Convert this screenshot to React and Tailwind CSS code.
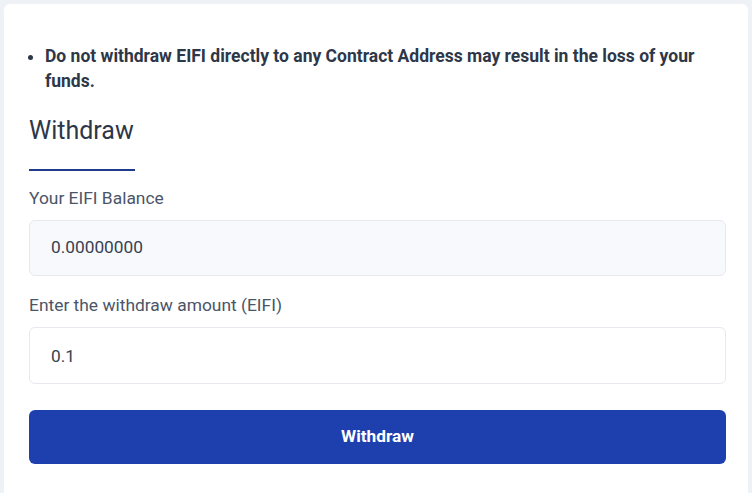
import React, { useState } from "react";

export default function App() {
  const [amount, setAmount] = useState("0.1");

  return (
    <div className="w-[752px] h-[493px] overflow-hidden bg-[#eef1f5] pl-[4px] pt-[4px] font-['Roboto',sans-serif]">
      <div className="w-[744px] h-[520px] bg-white rounded-[6px] pl-[25px] pr-[22px] pt-[40px]">
        <ul className="list-disc pl-[16px] text-[17.5px] leading-[25px] font-bold text-[#2d3748] marker:text-[#2d3748]">
          <li>
            Do not withdraw EIFI directly to any Contract Address may result in the loss of your funds.
          </li>
        </ul>

        <h2 className="mt-[21px] text-[25px] leading-[32px] text-[#2d3748]">Withdraw</h2>
        <div className="mt-[22px] w-[106px] h-[2px] bg-[#1e3a8a]" />

        <div className="mt-[15px] text-[17.4px] leading-[24px] text-[#4a5568]">Your EIFI Balance</div>
        <div className="mt-[10px] h-[56px] flex items-center px-[21px] bg-[#f7f9fc] border border-[#e6e9ee] rounded-[6px] text-[17.3px] text-[#374151]">
          0.00000000
        </div>

        <div className="mt-[17px] text-[17.4px] leading-[24px] text-[#4a5568]">Enter the withdraw amount (EIFI)</div>
        <input
          value={amount}
          onChange={(e) => setAmount(e.target.value)}
          className="mt-[10px] w-full h-[57px] px-[21px] bg-white border border-[#e6e9ee] rounded-[6px] text-[17.3px] text-[#374151] outline-none"
        />

        <button className="mt-[26px] w-full h-[54px] bg-[#1e40af] rounded-[6px] text-white text-[17.3px] font-bold">
          Withdraw
        </button>
      </div>
    </div>
  );
}
